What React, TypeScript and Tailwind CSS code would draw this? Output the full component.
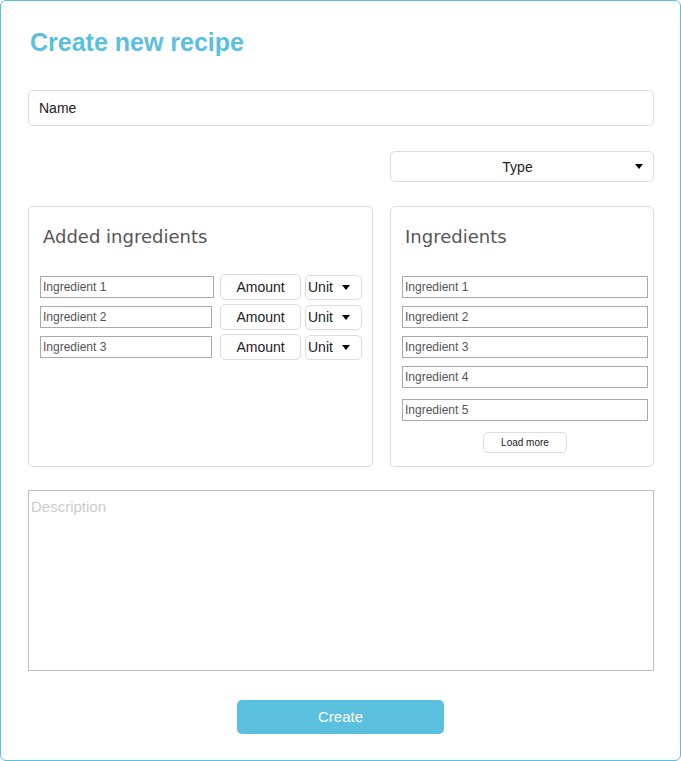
import React from 'react';

const Caret = () => (
  <span className="inline-block w-0 h-0 border-l-[4px] border-r-[4px] border-t-[5px] border-l-transparent border-r-transparent border-t-black" />
);

const IngredientInput = ({ label, width }: { label: string; width: string }) => (
  <div className={`${width} h-[22px] border border-[#a9a9a9] flex items-center pl-[2px] text-[12px] text-[#555]`}>
    {label}
  </div>
);

const App = () => {
  const added = [
    { label: 'Ingredient 1', width: 'w-[174px]' },
    { label: 'Ingredient 2', width: 'w-[172px]' },
    { label: 'Ingredient 3', width: 'w-[172px]' },
  ];

  return (
    <div className="w-[681px] h-[761px] bg-white border border-[#5bc0de] rounded-[6px] pl-[27px] pr-[26px] pt-[26px] font-['Liberation_Sans',Arial,sans-serif]">
      <h1 className="pl-[2px] text-[25px] leading-[30px] font-bold text-[#5bc0de]">Create new recipe</h1>

      <div className="mt-[33px] h-[36px] border border-[#ddd] rounded-[5px] px-[10px] pt-[1px] flex items-center text-[14px] text-[#222]">
        Name
      </div>

      <div className="mt-[25px] flex justify-end">
        <div className="relative w-[264px] h-[31px] border border-[#ddd] rounded-[5px] flex items-center justify-center pr-[9px] pt-[1px] text-[14px] text-[#222]">
          Type
          <span className="absolute right-[10px] top-[12px] flex">
            <Caret />
          </span>
        </div>
      </div>

      <div className="mt-[24px] flex gap-[17px]">
        <div className="w-[345px] h-[261px] shrink-0 border border-[#ddd] rounded-[5px] pt-[19px] pl-[11px]">
          <h2 className="pl-[3px] text-[18px] leading-[21px] text-[#555] font-['DejaVu_Sans',Verdana,sans-serif]">
            Added ingredients
          </h2>
          <div className="mt-[25px] flex flex-col">
            {added.map((row) => (
              <div key={row.label} className="h-[30px] grid grid-cols-[176px_81px_57px] gap-x-[4px] items-center">
                <IngredientInput label={row.label} width={row.width} />
                <div className="h-[26px] border border-[#ddd] rounded-[5px] flex items-center justify-center text-[14px] text-[#222]">
                  Amount
                </div>
                <div className="h-[25px] border border-[#ddd] rounded-[5px] flex items-center pl-[2px] gap-[9px] text-[14px] text-[#222]">
                  Unit
                  <Caret />
                </div>
              </div>
            ))}
          </div>
        </div>

        <div className="w-[264px] h-[261px] shrink-0 border border-[#ddd] rounded-[5px] pt-[19px] pl-[11px] pr-[5px]">
          <h2 className="pl-[3px] text-[18px] leading-[21px] text-[#555] font-['DejaVu_Sans',Verdana,sans-serif]">
            Ingredients
          </h2>
          <div className="mt-[25px] flex flex-col">
            {['Ingredient 1', 'Ingredient 2', 'Ingredient 3', 'Ingredient 4'].map((label) => (
              <div key={label} className="h-[30px] flex items-center">
                <IngredientInput label={label} width="w-[246px]" />
              </div>
            ))}
            <div className="h-[30px] mt-[3px] flex items-center">
              <IngredientInput label="Ingredient 5" width="w-[246px]" />
            </div>
            <div className="mt-[7px] flex justify-center">
              <button className="w-[84px] h-[21px] border border-[#ddd] rounded-[5px] bg-white text-[10px] text-[#222]">
                Load more
              </button>
            </div>
          </div>
        </div>
      </div>

      <textarea
        placeholder="Description"
        className="mt-[23px] block w-full h-[181px] border border-[#c0c0c0] resize-none pt-[7px] pl-[2px] text-[15px] leading-[17px] text-[#222] placeholder:text-[#ccc] outline-none"
      />

      <div className="mt-[29px] flex">
        <button className="ml-[209px] w-[207px] h-[34px] rounded-[5px] bg-[#5bc0de] text-white text-[15px]">Create</button>
      </div>
    </div>
  );
};

export default App;
